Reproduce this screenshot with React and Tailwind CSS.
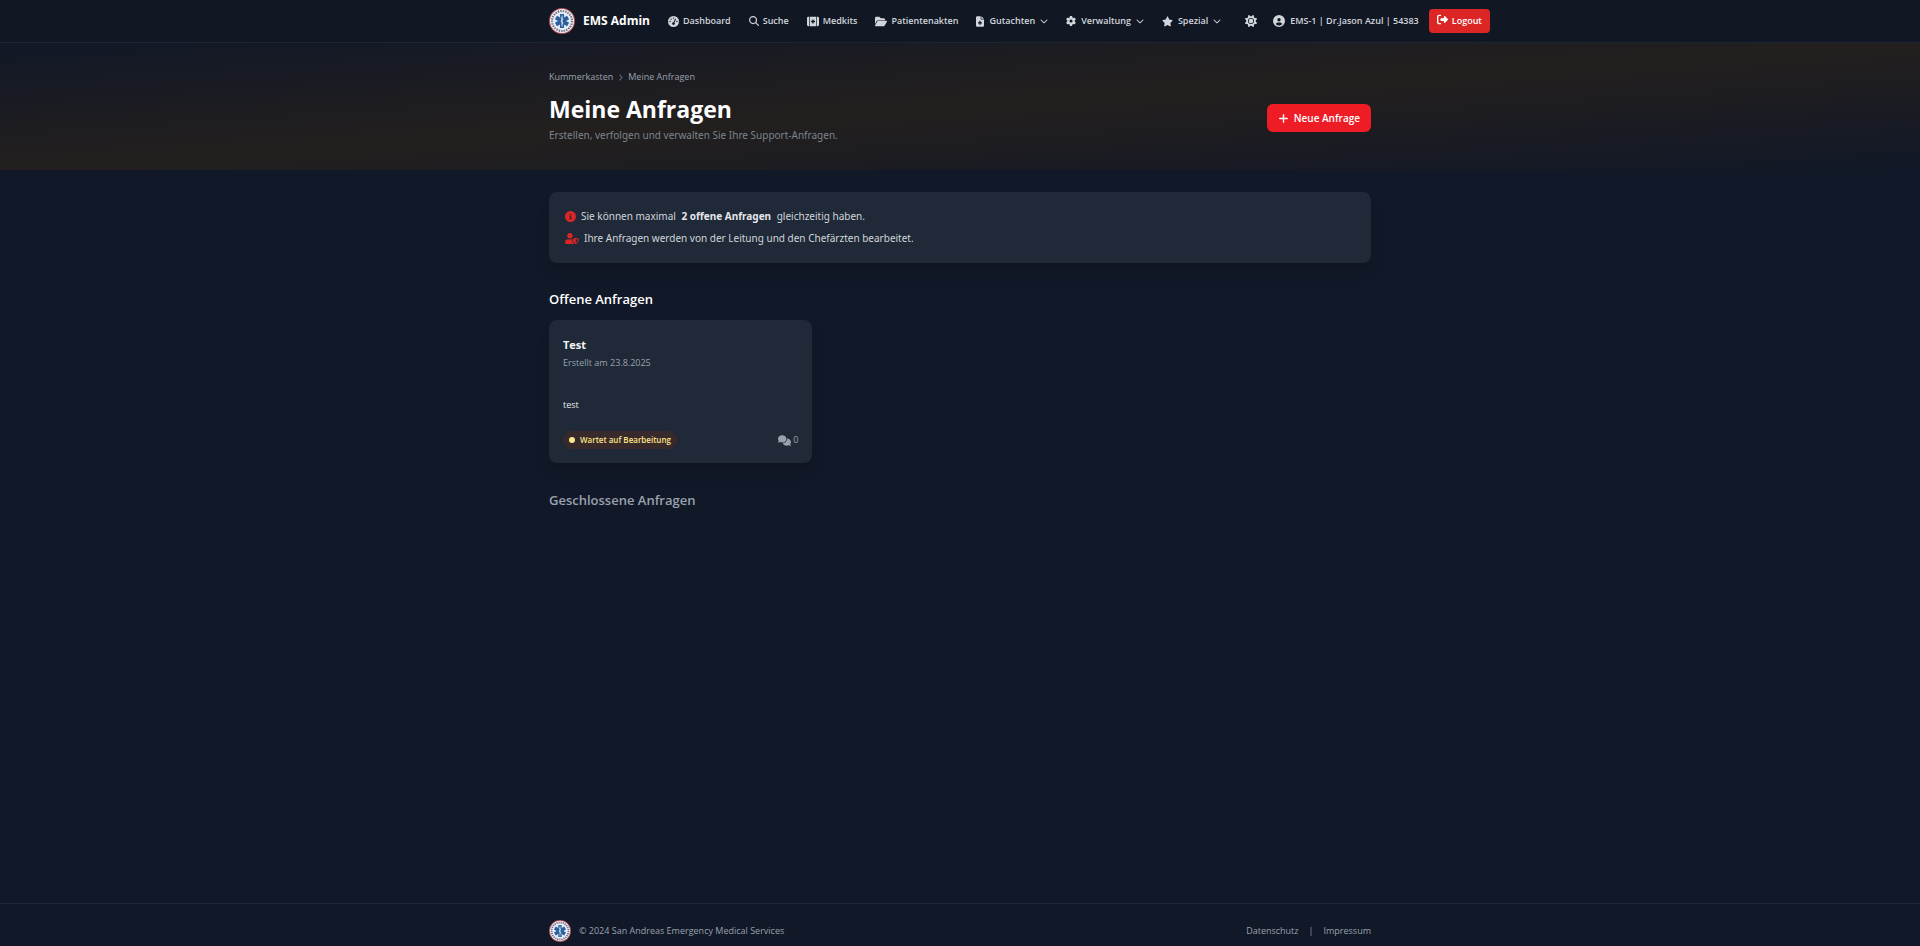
import {
  FaChevronDown, FaChevronRight, FaCircleInfo, FaCircleUser, FaComments, FaFileMedical, FaFolderOpen, FaGaugeHigh,
  FaGear, FaKitMedical, FaMagnifyingGlass, FaPlus, FaRightFromBracket, FaStar, FaSun
} from 'react-icons/fa6';
import { FaUserShield } from 'react-icons/fa';

const navLinks = [
  { label: 'Dashboard', icon: FaGaugeHigh, size: 'h-[11px] w-[11px]' },
  { label: 'Suche', icon: FaMagnifyingGlass, size: 'h-[10px] w-[10px]' },
  { label: 'Medkits', icon: FaKitMedical, size: 'h-[11px] w-3' },
  { label: 'Patientenakten', icon: FaFolderOpen, size: 'h-[11px] w-3' },
];

const navMenus = [
  { label: 'Gutachten', icon: FaFileMedical, size: 'h-[11px] w-2' },
  { label: 'Verwaltung', icon: FaGear, size: 'h-[10px] w-[10px]' },
  { label: 'Spezial', icon: FaStar, size: 'h-[11px] w-[11px]' },
];

const openRequests = [
  { id: 1, title: 'Test', created: '23.8.2025', text: 'test', status: 'Wartet auf Bearbeitung', comments: 0 },
];

function Logo({ className }) {
  return (
    <svg viewBox="0 0 52 52" className={className} role="img" aria-label="EMS Logo">
      <circle cx="26" cy="26" r="26" fill="#b5525c" />
      <circle cx="26" cy="26" r="24" fill="#f3f4f8" />
      <circle cx="26" cy="26" r="20" fill="none" stroke="#4a5270" strokeWidth="4.5" strokeDasharray="3 2" opacity="0.8" />
      <circle cx="26" cy="26" r="15.5" fill="#dfe6f2" />
      <g fill="#2a5f9e">
        <rect x="22" y="12" width="8" height="28" />
        <rect x="22" y="12" width="8" height="28" transform="rotate(60 26 26)" />
        <rect x="22" y="12" width="8" height="28" transform="rotate(120 26 26)" />
      </g>
      <path d="M26 15v22M23.5 20c5 1 5 3 2.500 4s-3 3 0 4 2.500 3 0 4" fill="none" stroke="#fff" strokeWidth="1.500" />
    </svg>
  );
}

function Navbar() {
  return (
    <header className="border-b border-[#1d2532] bg-[#111824]">
      <div className="mx-auto flex h-[42px] w-full max-w-[854px] items-center px-4 whitespace-nowrap">
        <a href="#" className="flex shrink-0 items-center gap-2 text-[12px] font-bold text-white">
          <Logo className="h-[26px] w-[26px]" />
          EMS Admin
        </a>
        <nav className="ml-[18px] flex shrink-0 items-center gap-[18px] text-[9px] font-semibold text-gray-300">
          {navLinks.map(({ label, icon: Icon, size }) => (
            <a key={label} href="#" className="flex items-center gap-1">
              <Icon className={size} />
              {label}
            </a>
          ))}
          {navMenus.map(({ label, icon: Icon, size }) => (
            <button key={label} type="button" className="flex items-center gap-[5px]">
              <Icon className={size} />
              {label}
              <FaChevronDown className="h-2 w-2" />
            </button>
          ))}
        </nav>
        <div className="ml-6 flex shrink-0 items-center text-[9px] font-semibold text-gray-300">
          <button type="button" aria-label="Design wechseln"><FaSun className="h-3 w-3" /></button>
          <a href="#" className="ml-4 flex items-center gap-[5px]">
            <FaCircleUser className="h-3 w-3" />
            EMS-1 | Dr.Jason Azul | 54383
          </a>
          <button type="button" className="ml-[10px] flex h-6 items-center gap-1 rounded bg-[#dc2626] px-2 text-white">
            <FaRightFromBracket className="mb-1 h-[11px] w-[11px]" />
            Logout
          </button>
        </div>
      </div>
    </header>
  );
}

function PageHeader() {
  return (
    <div className="bg-linear-to-br/srgb from-[#111827] via-[#231f1e] to-[#111827]">
      <div className="mx-auto w-full max-w-[854px] px-4 pt-[26px] pb-[27px]">
        <nav aria-label="Breadcrumb" className="flex items-center gap-[5px] text-[9px] leading-4 text-gray-400">
          <a href="#">Kummerkasten</a>
          <FaChevronRight className="h-[7px] w-[5px] text-gray-500" />
          <span>Meine Anfragen</span>
        </nav>
        <div className="mt-2 flex items-center justify-between">
          <div>
            <h1 className="text-[23px] leading-8 font-bold text-white">Meine Anfragen</h1>
            <p className="mt-[2px] font-['Noto_Sans',sans-serif] text-[10px] leading-4 text-[#7d838e]">Erstellen, verfolgen und verwalten Sie Ihre Support-Anfragen.</p>
          </div>
          <button type="button" className="flex h-7 items-center gap-[5px] rounded-md bg-[#ee1c25] px-[11px] text-[10px] font-semibold text-white">
            <FaPlus className="h-[11px] w-[11px]" />
            Neue Anfrage
          </button>
        </div>
      </div>
    </div>
  );
}

function RequestCard({ request }) {
  return (
    <article className="rounded-lg bg-[#1f2937] px-[14px] pt-[17px] pb-[14px] shadow-lg">
      <h3 className="text-[11px] leading-4 font-bold text-gray-100">{request.title}</h3>
      <p className="mt-[2px] text-[9px] leading-4 text-gray-400">Erstellt am {request.created}</p>
      <p className="mt-[26px] text-[9px] leading-4 text-gray-200">{request.text}</p>
      <div className="mt-[18px] flex items-center justify-between">
        <span className="flex h-[18px] items-center gap-[5px] rounded-full bg-[#38292b] px-[6px] text-[8px] font-semibold text-[#fde68a]">
          <span className="h-[6px] w-[6px] rounded-full bg-[#fde68a]" />
          {request.status}
        </span>
        <span className="flex items-center gap-[2px] text-[9px] text-gray-400">
          <FaComments className="h-[13px] w-[13px]" />
          {request.comments}
        </span>
      </div>
    </article>
  );
}

function Footer() {
  return (
    <footer className="border-t border-[#1d2636]">
      <div className="mx-auto flex w-full max-w-[854px] items-center justify-between px-4 pt-4 pb-1 text-[9px] leading-4 text-gray-400">
        <div className="flex items-center gap-2">
          <Logo className="h-[22px] w-[22px]" />
          <span>© 2024 San Andreas Emergency Medical Services</span>
        </div>
        <div className="flex items-center gap-[10px]">
          <a href="#">Datenschutz</a>
          <span>|</span>
          <a href="#">Impressum</a>
        </div>
      </div>
    </footer>
  );
}

export default function App() {
  return (
    <div className="flex min-h-screen flex-col bg-[#111827] font-['Open_Sans','Noto_Sans',sans-serif]">
      <Navbar />
      <PageHeader />
      <main className="mx-auto w-full max-w-[854px] flex-1 px-4 pt-[22px]">
        <div className="rounded-lg bg-[#1f2937] px-4 pt-[13px] pb-[14px] font-['Noto_Sans',sans-serif] text-[10px] leading-[22px] text-gray-300 shadow-lg">
          <p className="flex items-center gap-[5px]">
            <FaCircleInfo className="h-[11px] w-[11px] text-[#dc2626]" />
            <span>Sie können maximal <strong className="mx-[3px] font-bold text-gray-200">2 offene Anfragen</strong> gleichzeitig haben.</span>
          </p>
          <p className="flex items-center gap-[5px]">
            <FaUserShield className="h-[11px] w-[14px] text-[#dc2626]" />
            Ihre Anfragen werden von der Leitung und den Chefärzten bearbeitet.
          </p>
        </div>

        <section className="mt-[26px]">
          <h2 className="text-[13px] leading-5 font-semibold text-white">Offene Anfragen</h2>
          <div className="mt-[11px] grid grid-cols-3 gap-4">
            {openRequests.map((request) => (
              <RequestCard key={request.id} request={request} />
            ))}
          </div>
        </section>

        <section className="mt-[27px]">
          <h2 className="text-[13px] leading-5 font-semibold text-gray-400">Geschlossene Anfragen</h2>
        </section>
      </main>
      <Footer />
    </div>
  );
}
